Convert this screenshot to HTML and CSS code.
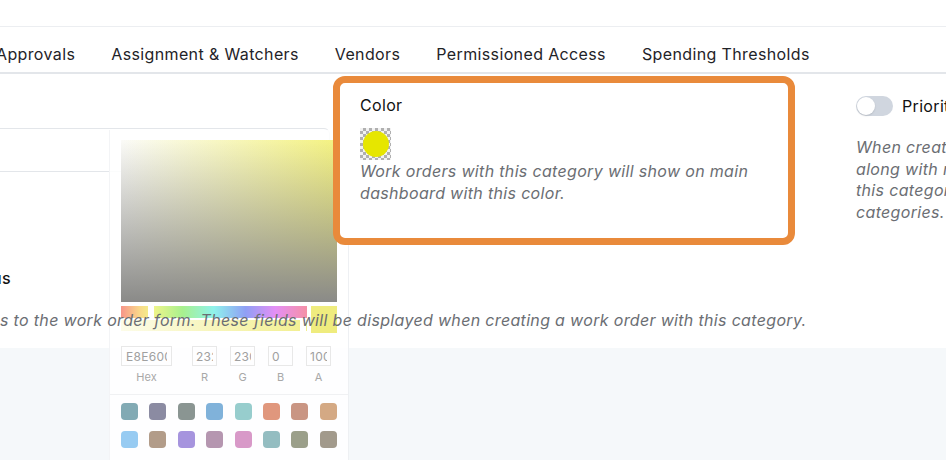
FILE: index.html
```html
<!DOCTYPE html>
<html lang="en">
<head>
  <meta charset="UTF-8" />
  <title>Category settings</title>
  <link rel="stylesheet" href="styles.css">
</head>
<body>
  <div class="topbar"></div>

  <nav class="tabs">
    <a class="tab">Approvals</a>
    <a class="tab">Assignment &amp; Watchers</a>
    <a class="tab">Vendors</a>
    <a class="tab">Permissioned Access</a>
    <a class="tab">Spending Thresholds</a>
  </nav>

  <main class="content">
    <div class="settings">
      <div class="col col-left">
        <div class="input-box"></div>
      </div>

      <div class="col col-color highlight">
        <div class="field-label">Color</div>
        <div class="swatch"><span class="dot"></span></div>
        <p class="hint">Work orders with this category will show on main dashboard with this color.</p>
      </div>

      <div class="col col-right">
        <label class="toggle-row">
          <span class="toggle"><span class="knob"></span></span>
          Prioritize category
        </label>
        <p class="hint">When creating a work order, show this category<br>along with recent selections at the top, so that<br>this category appears above the other<br>categories.</p>
      </div>
    </div>

    <div class="custom-fields">
      <div class="field-label">us</div>
      <p class="hint">s to the work order form. These fields will be displayed when creating a work order with this category.</p>
    </div>

    <div class="picker">
      <div class="saturation"></div>
      <div class="sliders">
        <div class="bars">
          <div class="hue"><span class="thumb"></span></div>
          <div class="alpha"><span class="thumb"></span></div>
        </div>
        <div class="preview"></div>
      </div>
      <div class="values">
        <label class="val val-hex"><input value="E8E600" readonly>Hex</label>
        <label class="val"><input value="232" readonly>R</label>
        <label class="val"><input value="230" readonly>G</label>
        <label class="val"><input value="0" readonly>B</label>
        <label class="val"><input value="100" readonly>A</label>
      </div>
      <div class="presets">
        <span style="background:#82aab4"></span>
        <span style="background:#8b8ba2"></span>
        <span style="background:#8a9592"></span>
        <span style="background:#80b2da"></span>
        <span style="background:#97cdcd"></span>
        <span style="background:#e0977d"></span>
        <span style="background:#c99583"></span>
        <span style="background:#d4a984"></span>
        <span style="background:#97cbf2"></span>
        <span style="background:#b29c89"></span>
        <span style="background:#a694de"></span>
        <span style="background:#b596b0"></span>
        <span style="background:#d899c8"></span>
        <span style="background:#94bdc1"></span>
        <span style="background:#9b9f8a"></span>
        <span style="background:#a29a8c"></span>
      </div>
    </div>
  </main>
</body>
</html>
```

FILE: styles.css
```css
body {
  margin: 0;
  height: 460px;
  overflow: hidden;
  background: #f5f8fa;
  font-family: Inter, "Noto Sans", sans-serif;
  letter-spacing: 0.33px;
  color: #1f2328;
}

.topbar {
  height: 26px;
  background: #fff;
  border-bottom: 1px solid #eceef1;
}

.tabs {
  display: flex;
  gap: 36px;
  background: #fff;
  margin-left: -4px;
  padding: 17px 0 8px;
  border-bottom: 2px solid #e3e6ea;
  font-size: 16px;
  line-height: 20px;
  letter-spacing: 0.37px;
  white-space: nowrap;
}

.tab {
  color: #1f2328;
}

.content {
  position: relative;
  background: #fff;
}

.settings {
  display: flex;
  height: 171px;
}

.col-left {
  width: 370px;
  margin-left: -40px;
  flex: none;
}

.input-box {
  margin-top: 54px;
  height: 42px;
  border: 1px solid #e3e6ea;
  border-radius: 6px;
}

.highlight {
  position: relative;
  z-index: 2;
  flex: none;
  box-sizing: border-box;
  width: 462px;
  height: 169px;
  margin: 2px 0 0 3px;
  padding: 12px 20px;
  background: #fff;
  border: 7px solid #e98a3b;
  border-radius: 12px;
}

.field-label {
  font-size: 16px;
  line-height: 20px;
  color: #111;
}

.hint {
  margin: 0;
  font-size: 16px;
  line-height: 21.5px;
  font-style: italic;
  color: #6b6e73;
}

.swatch {
  width: 31px;
  height: 32px;
  margin-top: 13px;
  display: flex;
  align-items: center;
  justify-content: center;
  background: conic-gradient(#b0b0b0 25%, #f2f2f2 0 50%, #b0b0b0 0 75%, #f2f2f2 0) 0 0 / 6px 6px;
}

.dot {
  width: 26px;
  height: 26px;
  border-radius: 50%;
  background: #e6e600;
}

.col-color .hint {
  margin-top: 1px;
}

.col-right {
  flex: none;
  margin-left: 61px;
  padding-top: 22px;
  white-space: nowrap;
}

.toggle-row {
  display: flex;
  align-items: center;
  gap: 9px;
  font-size: 16px;
  line-height: 20px;
  color: #111;
}

.toggle {
  width: 37px;
  height: 20px;
  border-radius: 10px;
  background: #d0d6df;
  position: relative;
}

.knob {
  position: absolute;
  top: 1px;
  left: 1px;
  width: 18px;
  height: 18px;
  border-radius: 50%;
  background: #fff;
  box-shadow: 0 1px 2px rgba(0,0,0,0.12);
}

.col-right .hint {
  margin-top: 21px;
}

.custom-fields {
  padding: 23px 0 16px;
  white-space: nowrap;
}

.custom-fields .field-label {
  font-weight: 500;
  margin-left: -8px;
}

.custom-fields .hint {
  position: relative;
  z-index: 2;
  margin-top: 22px;
}

/* color picker fading in */
.picker {
  position: absolute;
  z-index: 1;
  left: 109px;
  top: 56px;
  width: 240px;
  height: 340px;
  box-sizing: border-box;
  padding: 10px 11px;
  background: rgba(255,255,255,0.85);
  border-left: 1px solid #f3f4f6;
  border-right: 1px solid #eef0f3;
  letter-spacing: 0;
}

.saturation {
  height: 162px;
  background:
    linear-gradient(to top, #8a8a88, rgba(138,138,136,0)),
    linear-gradient(to right, #fbfbf8, #f4f281);
}

.sliders {
  display: flex;
  gap: 4px;
  margin-top: 4px;
}

.bars {
  width: 187px;
}

.hue, .alpha {
  position: relative;
  height: 12px;
}

.hue {
  background: linear-gradient(to right, #f7958a 0%, #f9d88a 10%, #f2f58a 17%, #a8f08e 33%, #8ff2ec 50%, #8f9ff5 67%, #e48ff5 83%, #f590a6 100%);
}

.alpha {
  margin-top: 2px;
  height: 11px;
  background: linear-gradient(to right, rgba(242,240,140,0.2), #f2ef90);
}

.thumb {
  position: absolute;
  top: 0;
  bottom: 0;
  width: 6px;
  background: #fff;
}

.hue .thumb { left: 27px; }
.alpha .thumb { right: 1px; }

.preview {
  width: 26px;
  height: 27px;
  background: #efec7e;
}

.values {
  display: flex;
  gap: 13px;
  margin-top: 13px;
  padding-bottom: 10px;
  margin-left: -11px;
  margin-right: -11px;
  padding-left: 11px;
  border-bottom: 1px solid #f0f1f3;
}

.val {
  display: flex;
  flex-direction: column;
  align-items: center;
  gap: 4px;
  font-size: 11px;
  line-height: 14px;
  color: #a8a8a8;
}

.val input {
  width: 25px;
  height: 20px;
  box-sizing: border-box;
  padding: 0 3px;
  border: 1px solid #e8e8e8;
  font: 12px Inter, "Noto Sans", sans-serif;
  letter-spacing: 0.3px;
  color: #a0a0a0;
  background: transparent;
  outline: none;
}

.val-hex {
  margin-right: 7px;
}

.val-hex input {
  width: 51px;
  padding: 0 4px;
}

.presets {
  display: grid;
  grid-template-columns: repeat(8, 17px);
  column-gap: 11.4px;
  row-gap: 11px;
  margin-top: 8px;
}

.presets span {
  height: 17px;
  border-radius: 4px;
}
```
